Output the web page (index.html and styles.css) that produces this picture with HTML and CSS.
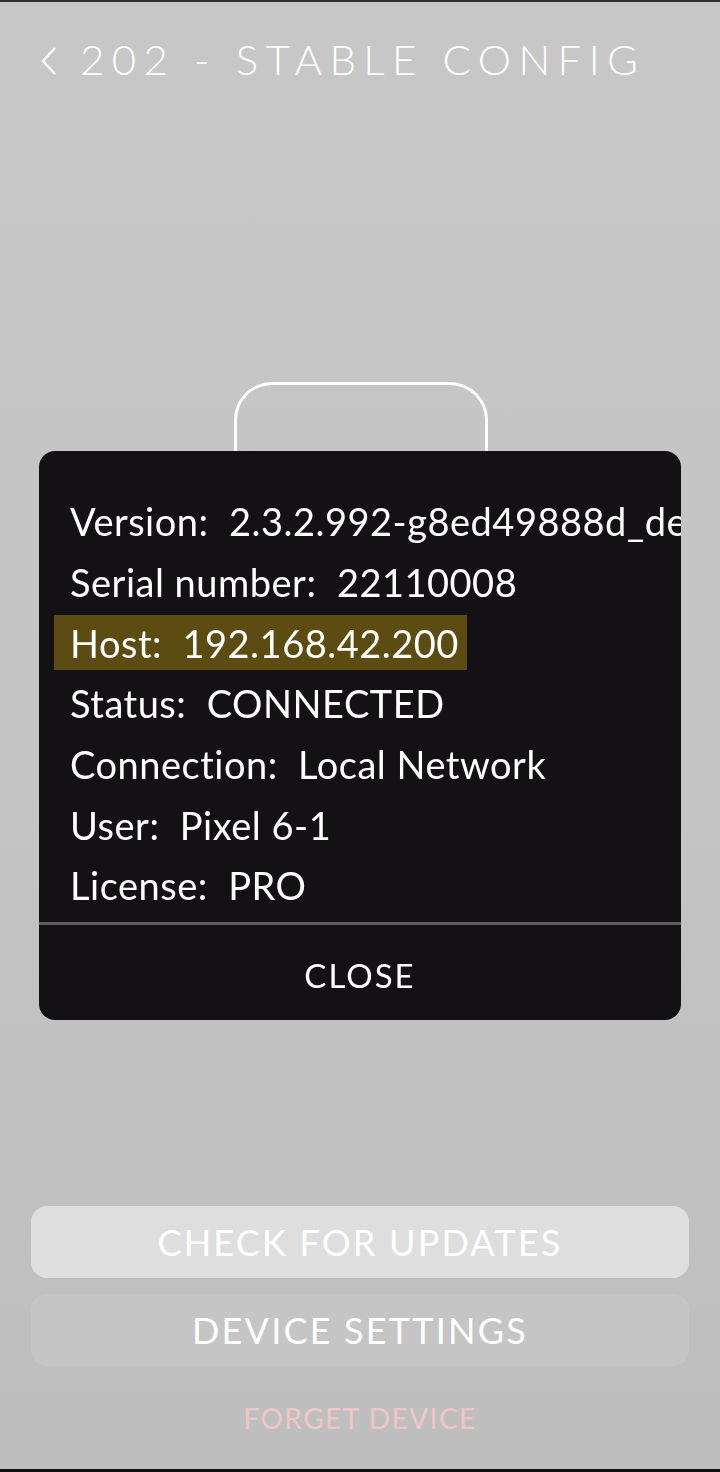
FILE: index.html
```html
<!DOCTYPE html>
<html>
<head>
<meta charset="utf-8">
<link rel="stylesheet" href="styles.css">
</head>
<body>
<div class="page">
  <header class="header">
    <svg class="back" width="18" height="30" viewBox="0 0 18 30"><path d="M15 2 L3 15 L15 28" fill="none" stroke="#fff" stroke-width="2.5"/></svg>
    <h1 class="title">202 - STABLE CONFIG</h1>
  </header>
  <div class="device"></div>
  <div class="spacer"></div>
  <div class="actions">
    <button class="btn btn-primary">CHECK FOR UPDATES</button>
    <button class="btn btn-secondary">DEVICE SETTINGS</button>
    <div class="forget">FORGET DEVICE</div>
  </div>
</div>
<div class="overlay">
  <div class="dialog">
    <div class="info">
      <div class="row">Version:&nbsp; 2.3.2.992-g8ed49888d_dev</div>
      <div class="row">Serial number:&nbsp; 22110008</div>
      <div class="row"><span class="hl">Host:&nbsp; 192.168.42.200</span></div>
      <div class="row">Status:&nbsp; CONNECTED</div>
      <div class="row">Connection:&nbsp; Local Network</div>
      <div class="row">User:&nbsp; Pixel 6-1</div>
      <div class="row">License:&nbsp; PRO</div>
    </div>
    <div class="close">CLOSE</div>
  </div>
</div>
</body>
</html>
```
FILE: styles.css
```css
html, body {
  margin: 0;
  padding: 0;
}
body {
  width: 720px;
  height: 1472px;
  overflow: hidden;
  font-family: Lato, "Noto Sans", sans-serif;
  color: #fff;
}
.page {
  box-sizing: border-box;
  height: 1472px;
  display: flex;
  flex-direction: column;
  background: linear-gradient(#c7c7c7, #c4c4c4 50%, #bebebe);
  border-top: 2px solid #2e2e2e;
  border-bottom: 3px solid #111;
}
.header {
  display: flex;
  align-items: center;
  padding: 34px 0 0 40px;
  height: 46px;
}
.back {
  flex: none;
  margin-top: 4px;
}
.title {
  margin: 0 0 0 22px;
  font-size: 42px;
  font-weight: 300;
  letter-spacing: 7.4px;
  line-height: 46px;
  white-space: nowrap;
}
.device {
  box-sizing: border-box;
  width: 254px;
  height: 320px;
  margin: 300px 0 0 234px;
  border: 3px solid #fff;
  border-bottom: none;
  border-radius: 38px 38px 0 0;
}
.spacer {
  flex: 1;
}
.actions {
  display: flex;
  flex-direction: column;
  gap: 16px;
  padding: 0 31px 31px;
}
.btn {
  height: 72px;
  border: none;
  border-radius: 16px;
  font-family: Lato, "Noto Sans", sans-serif;
  font-size: 36px;
  font-weight: 400;
  color: #fff;
  letter-spacing: 2.2px;
}
.btn-primary {
  background: #dedede;
}
.btn-secondary {
  background: #c5c5c5;
}
.forget {
  margin-top: 16px;
  text-align: center;
  font-size: 28px;
  line-height: 40px;
  letter-spacing: 1.5px;
  color: #f1c6c6;
}
.overlay {
  position: fixed;
  inset: 0;
}
.dialog {
  position: absolute;
  left: 39px;
  top: 451px;
  width: 642px;
  height: 569px;
  background: #131114;
  border-radius: 16px;
  overflow: hidden;
  display: flex;
  flex-direction: column;
}
.info {
  flex: none;
  box-sizing: border-box;
  height: 474px;
  padding: 40px 0 0 31px;
  border-bottom: 3px solid #5f5d61;
}
.row {
  display: flex;
  align-items: center;
  height: 60.7px;
  font-size: 38px;
  letter-spacing: 0.5px;
  white-space: nowrap;
}
.hl {
  display: flex;
  align-items: center;
  height: 55px;
  margin-left: -16px;
  padding: 0 8px 0 16px;
  background: #5c4c12;
}
.close {
  flex: 1;
  display: flex;
  align-items: center;
  justify-content: center;
  font-size: 33px;
  letter-spacing: 2px;
  padding-top: 5px;
}
```
